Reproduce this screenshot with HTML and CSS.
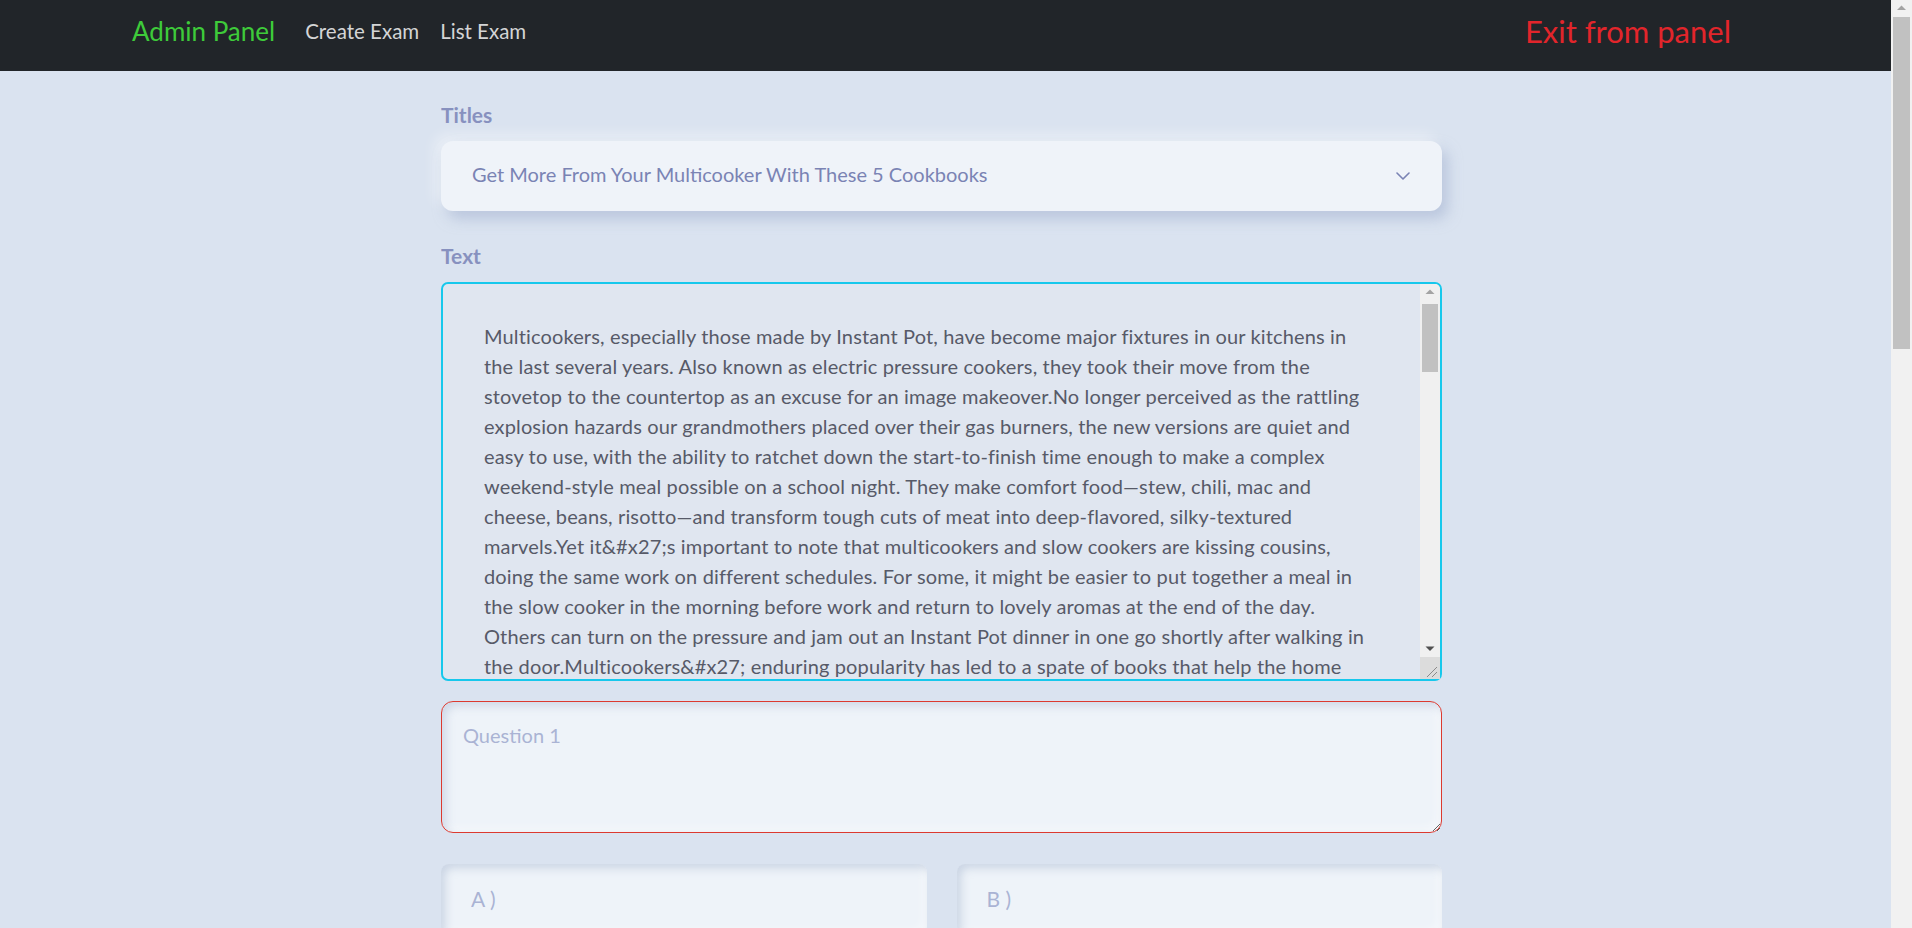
FILE: index.html
```html
<!DOCTYPE html>
<html lang="en">
<head>
<meta charset="utf-8">
<title>Admin Panel</title>
<link rel="stylesheet" href="styles.css">
</head>
<body>
<div class="page">
  <nav class="navbar">
    <div class="nav-left">
      <a class="brand" href="#">Admin Panel</a>
      <a class="nav-link" href="#">Create Exam</a>
      <a class="nav-link" href="#">List Exam</a>
    </div>
    <a class="exit" href="#">Exit from panel</a>
  </nav>
  <main class="form-wrap">
    <label class="field-label">Titles</label>
    <div class="select-box">
      <span class="select-text">Get More From Your Multicooker With These 5 Cookbooks</span>
      <svg class="chevron" width="14" height="8" viewBox="0 0 14 8"><path d="M1 1l6 6 6-6" fill="none" stroke="#7a83b4" stroke-width="1.6" stroke-linecap="round" stroke-linejoin="round"/></svg>
    </div>
    <label class="field-label second">Text</label>
    <div class="text-wrap">
      <textarea class="text-area">

Multicookers, especially those made by Instant Pot, have become major fixtures in our kitchens in the last several years. Also known as electric pressure cookers, they took their move from the stovetop to the countertop as an excuse for an image makeover.No longer perceived as the rattling explosion hazards our grandmothers placed over their gas burners, the new versions are quiet and easy to use, with the ability to ratchet down the start-to-finish time enough to make a complex weekend-style meal possible on a school night. They make comfort food—stew, chili, mac and cheese, beans, risotto—and transform tough cuts of meat into deep-flavored, silky-textured marvels.Yet it&amp;#x27;s important to note that multicookers and slow cookers are kissing cousins, doing the same work on different schedules. For some, it might be easier to put together a meal in the slow cooker in the morning before work and return to lovely aromas at the end of the day. Others can turn on the pressure and jam out an Instant Pot dinner in one go shortly after walking in the door.Multicookers&amp;#x27; enduring popularity has led to a spate of books that help the home cook get the most out of their machines. Some of them are general guides, others focus on a single cuisine or a single way of eating, and a few of them manage to do both at once. We spent weeks cooking our way through a stack of them, and these are the five that earned a permanent place on our kitchen shelves.The first is a broad primer for anyone who has just pulled a shiny new appliance out of its box and has no idea where to begin. It walks through every button and setting, explains what natural release and quick release actually mean, and offers a hundred dependable recipes that range from weeknight soups to holiday roasts. The instructions are clear, the timings are accurate, and the results are consistently good.The second book takes a narrower path, focusing entirely on the vibrant flavors of Indian home cooking. Dals that would normally simmer for hours are ready in minutes, and the author has a knack for building layers of spice without fuss. If you have ever wanted to make a proper biryani on a Tuesday, this is the place to start.
      </textarea>
      <div class="ta-scroll" aria-hidden="true">
        <div class="sb-btn"><svg width="20" height="17" viewBox="0 0 20 17"><polygon points="5.5,10 14.5,10 10,5.5" fill="#a3a3a3"/></svg></div>
        <div class="sb-track"><div class="sb-thumb ta-thumb"></div></div>
        <div class="sb-btn"><svg width="20" height="17" viewBox="0 0 20 17"><polygon points="5.5,6.5 14.5,6.5 10,11" fill="#505050"/></svg></div>
        <div class="sb-corner"><svg width="20" height="21" viewBox="0 0 20 21"><path d="M17 10L7 20M17 15L12 20" stroke="#8a8a8a" stroke-width="1"/></svg></div>
      </div>
    </div>
    <textarea class="question" placeholder="Question 1"></textarea>
    <div class="answers">
      <input class="answer" type="text" placeholder="A )">
      <input class="answer" type="text" placeholder="B )">
      <input class="answer" type="text" placeholder="C )">
      <input class="answer" type="text" placeholder="D )">
    </div>
  </main>
</div>
<div class="page-scroll" aria-hidden="true">
  <div class="sb-btn"><svg width="21" height="17" viewBox="0 0 21 17"><polygon points="6,10 15,10 10.5,5.5" fill="#a3a3a3"/></svg></div>
  <div class="sb-track"><div class="sb-thumb page-thumb"></div></div>
</div>
</body>
</html>
```
FILE: styles.css
```css
* { box-sizing: border-box; }
html, body {
  margin: 0;
  padding: 0;
}
body {
  display: flex;
  height: 100vh;
  overflow: hidden;
  background: #dae3f0;
  font-family: "Lato", "Noto Sans", sans-serif;
  font-size: 20px;
  line-height: 1.5;
  color: #5a5d6b;
}
.page {
  flex: 1;
  min-width: 0;
  overflow: hidden;
}
/* fake classic scrollbars */
.page-scroll {
  width: 21px;
  flex: none;
  height: 100vh;
  background: #f1f1f1;
  display: flex;
  flex-direction: column;
}
.sb-btn {
  height: 17px;
  flex: none;
  display: flex;
  justify-content: center;
}
.sb-btn svg {
  display: block;
}
.sb-track {
  flex: 1;
  display: flex;
  flex-direction: column;
  padding: 0 2px;
}
.sb-thumb {
  background: #c1c1c1;
}
.page-thumb {
  height: 332px;
}
.ta-thumb {
  margin-top: 3px;
  height: 68px;
}
.sb-corner {
  height: 22px;
  flex: none;
  background: #dcdcdc;
}
.sb-corner svg {
  display: block;
}
.navbar {
  height: 71px;
  background: #212529;
  display: flex;
  align-items: center;
  justify-content: space-between;
  padding: 0 160px 8px 132px;
}
.nav-left {
  display: flex;
  align-items: center;
}
.brand {
  color: #3ecb3a;
  font-size: 26px;
  text-decoration: none;
  margin-right: 30px;
}
.nav-link {
  color: #d4d5d6;
  font-size: 20.5px;
  text-decoration: none;
  margin-right: 21px;
}
.exit {
  color: #e2252b;
  font-size: 31px;
  text-decoration: none;
}
.form-wrap {
  width: 1001px;
  margin-left: 441px;
  padding-top: 29px;
  padding-bottom: 60px;
  display: flex;
  flex-direction: column;
}
.field-label {
  color: #7f89ba;
  font-size: 21px;
  font-weight: 700;
  line-height: 30px;
  margin-bottom: 11px;
  opacity: 0.9;
}
.field-label.second {
  margin-top: 30px;
}
.select-box {
  height: 70px;
  background: #eff3f9;
  border-radius: 12px;
  display: flex;
  align-items: center;
  justify-content: space-between;
  padding: 0 32px 4px 31px;
  box-shadow: 6px 8px 14px rgba(160, 175, 205, 0.55), -6px -6px 14px rgba(255, 255, 255, 0.45);
}
.select-text {
  color: #7a83b4;
  font-size: 20px;
}
.chevron {
  display: block;
  margin-top: 4px;
}
.text-wrap {
  position: relative;
  height: 399px;
}
.text-area {
  display: block;
  width: 100%;
  height: 100%;
  background: #e0e6f0;
  border: 2px solid #17c8ec;
  border-radius: 7px;
  padding: 7px 61px 10px 41px;
  font-family: "Lato", "Noto Sans", sans-serif;
  font-size: 20px;
  letter-spacing: 0.14px;
  line-height: 30px;
  color: #575a68;
  outline: none;
  resize: none;
  overflow: hidden;
}
.ta-scroll {
  position: absolute;
  top: 2px;
  right: 2px;
  bottom: 2px;
  width: 20px;
  background: #f0f0f0;
  display: flex;
  flex-direction: column;
  border-top-right-radius: 5px;
}
.question {
  margin-top: 20px;
  height: 132px;
  flex: none;
  background: #eef3f9;
  border: 1px solid #dc3a30;
  border-radius: 12px;
  padding: 18px 21px;
  font-family: "Lato", "Noto Sans", sans-serif;
  font-size: 20px;
  line-height: 30px;
  color: #5a5d6b;
  outline: none;
  box-shadow: inset 4px 4px 8px rgba(170, 185, 210, 0.45), inset -4px -4px 8px rgba(255, 255, 255, 0.5);
  resize: vertical;
}
.question::placeholder {
  color: #aab3d4;
}
.answers {
  margin-top: 31px;
  display: grid;
  grid-template-columns: 1fr 1fr;
  column-gap: 30px;
  row-gap: 30px;
}
.answer {
  height: 70px;
  background: #eef3f9;
  border: none;
  border-radius: 8px;
  padding: 0 30px 2px;
  font-family: "Lato", "Noto Sans", sans-serif;
  font-size: 21px;
  color: #5a5d6b;
  outline: none;
  box-shadow: inset 4px 4px 8px rgba(170, 185, 210, 0.5), inset -4px -4px 8px rgba(255, 255, 255, 0.5);
}
.answer::placeholder {
  color: #aab3d4;
}
```
